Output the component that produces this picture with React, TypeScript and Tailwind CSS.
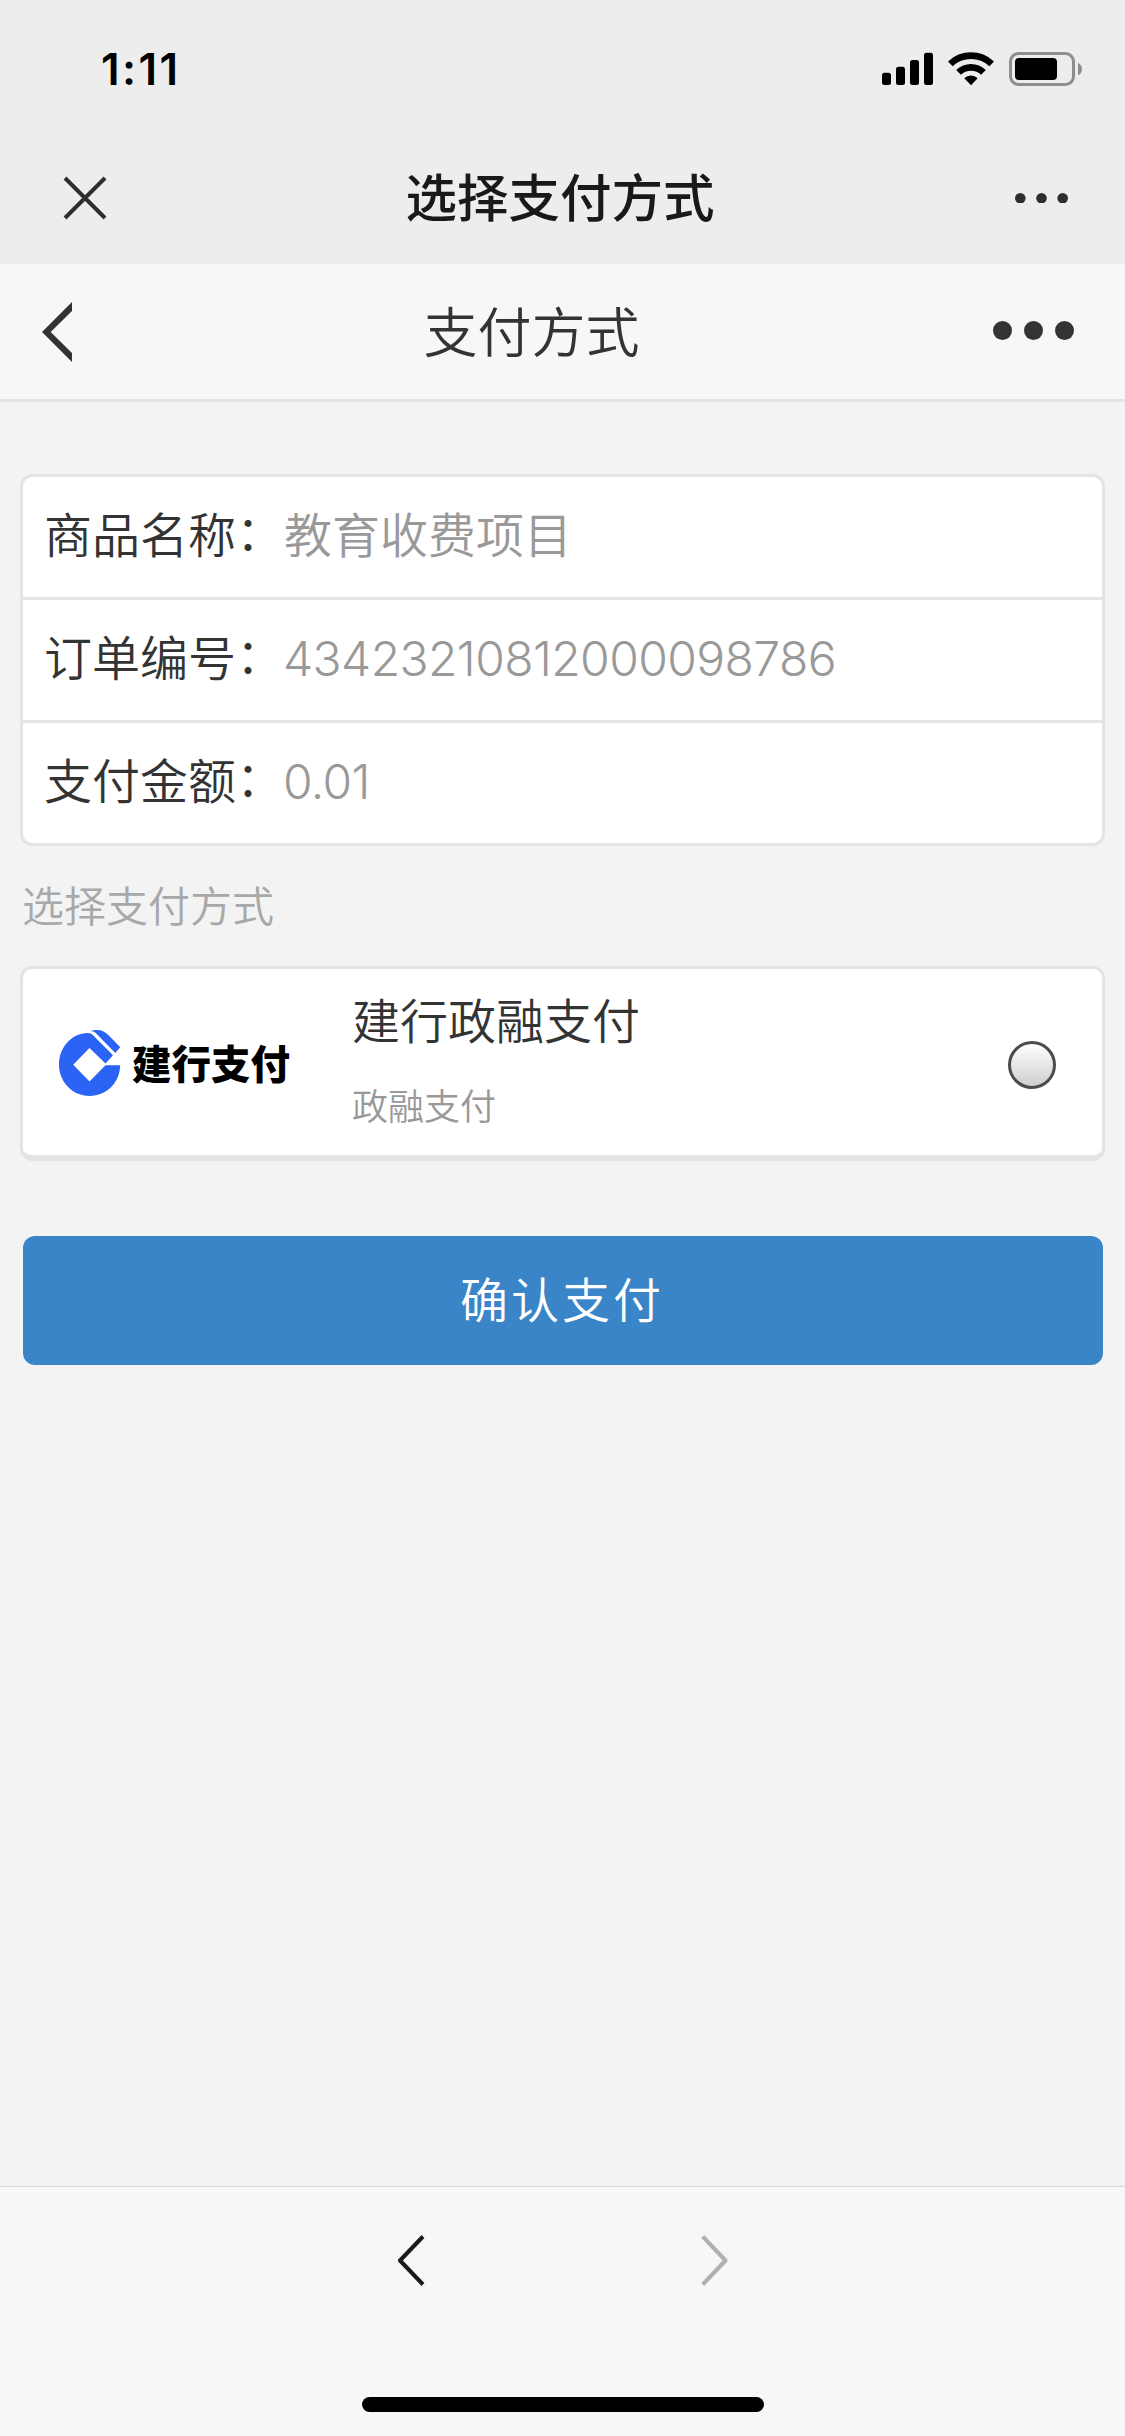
import { useState } from "react";

const ORDER = [
  { label: "商品名称", value: "教育收费项目", numeric: false },
  { label: "订单编号", value: "43423210812000098786", numeric: true },
  { label: "支付金额", value: "0.01", numeric: true },
];

function StatusIcons() {
  return (
    <svg width="200" height="34" viewBox="882 52 200 34">
      <rect x="882" y="72.7" width="9" height="12.3" rx="2.5" />
      <rect x="896" y="66.7" width="9" height="18.3" rx="2.5" />
      <rect x="910" y="60" width="9" height="25" rx="2.5" />
      <rect x="924" y="52.7" width="9" height="32.3" rx="2.5" />
      <path d="M948 61.500a33 33 0 0 1 46 0l-4.600 4.800a26.600 26.600 0 0 0-36.800 0z" />
      <path d="M956.200 70a21 21 0 0 1 29.600 0l-4.700 4.700a14.600 14.600 0 0 0-20.200 0z" />
      <path d="M964.300 78.200a9.600 9.600 0 0 1 13.400 0l-6.700 7z" />
      <rect
        x="1010.5"
        y="53.5"
        width="63"
        height="31"
        rx="8"
        fill="none"
        stroke="#8e8e8e"
        strokeWidth="3"
      />
      <rect x="1015" y="58" width="42" height="22" rx="4" />
      <path d="M1078 63c5.300 2 5.300 10.300 0 12.300z" fill="#8e8e8e" />
    </svg>
  );
}

function Dots({ r, gap, className }: { r: number; gap: number; className?: string }) {
  const w = gap * 2 + r * 2;
  return (
    <svg width={w} height={r * 2} viewBox={`0 0 ${w} ${r * 2}`} className={className}>
      {[0, 1, 2].map((i) => (
        <circle key={i} cx={r + gap * i} cy={r} r={r} />
      ))}
    </svg>
  );
}

function CcbLogo() {
  return (
    <svg width="62" height="66" viewBox="59 90 62 66" fill="#2b64f4" className="mt-[2px] shrink-0">
      <path d="M91.500 93.700L113 115.300L105.500 123.500L89.500 108L73.200 124.700L89.500 141.500L105.500 125.300H120.200C119.800 142.500 107 156 89.500 156C72.500 156 59 142 59 124.500C59 107 72 93.200 87.500 93C89 93 90.300 93.200 91.500 93.700z" />
      <path d="M90.600 91C93 90.200 95 90 97.500 90C101.500 90 105 91.800 107.800 94.500L120.300 107.300L115.300 113L95.500 92.800C94 91.600 92.500 91.100 90.600 91z" />
    </svg>
  );
}

export default function App() {
  const [picked, setPicked] = useState(false);

  return (
    <div className="flex h-[2436px] w-[1125px] flex-col overflow-hidden bg-[#f3f3f3] font-['Noto_Sans_CJK_SC',sans-serif] font-[350] text-[#333]">
      {/* Status bar */}
      <div className="flex h-[132px] items-start justify-between bg-[#ededed] pl-[101px] pr-[43px] pt-[52px] text-black">
        <span className="font-['Inter',sans-serif] text-[44px] font-semibold leading-[34px] tracking-[2.400px]">
          1:11
        </span>
        <StatusIcons />
      </div>

      {/* Browser bar */}
      <div className="grid h-[132px] grid-cols-[1fr_auto_1fr] items-center bg-[#ededed] pl-[63px] pr-[57px]">
        <button aria-label="关闭" className="justify-self-start">
          <svg width="44" height="44" viewBox="0 0 44 44" stroke="#2e2e2e" strokeWidth="4">
            <path d="M2 2L42 42M42 2L2 42" />
          </svg>
        </button>
        <h1 className="mr-[11px] pb-[6px] text-[51.500px] font-medium leading-none text-[#191919]">
          选择支付方式
        </h1>
        <Dots r={5.3} gap={21.2} className="justify-self-end fill-[#2e2e2e]" />
      </div>

      {/* Page header */}
      <header className="flex h-[138px] items-center justify-between border-b-3 border-[#e4e4e4] bg-[#f7f7f7] pl-[42px] pr-[51px]">
        <button aria-label="返回">
          <svg width="30" height="60" viewBox="0 0 30 60" fill="#333">
            <path d="M0 30L30 0V9L8.700 30L30 51V60z" />
          </svg>
        </button>
        <h2 className="mr-[2px] pb-[3px] text-[54px] leading-none">支付方式</h2>
        <Dots r={9.5} gap={31} className="mb-[2px] fill-[#333]" />
      </header>

      <main className="flex-1 px-[20px] pt-[72px]">
        <ul className="divide-y-3 divide-[#e4e4e4] rounded-[12px] border-3 border-[#e4e4e4] bg-white">
          {ORDER.map((row) => (
            <li
              key={row.label}
              className="box-content flex h-[120px] items-center pl-[21px] text-[48px] leading-[72px]"
            >
              <span className="w-[240px] whitespace-nowrap pb-[10px]">
                {row.label}
                {/* half-width punctuation keeps the colon close to the label */}
                <span className="font-['Noto_Sans_CJK_JP',sans-serif] [font-feature-settings:'halt']">
                  ：
                </span>
              </span>
              <span
                className={
                  row.numeric
                    ? "-ml-px pb-[2px] font-['Inter',sans-serif] tracking-[-0.600px] text-[#999]"
                    : "pb-[10px] text-[#999]"
                }
              >
                {row.value}
              </span>
            </li>
          ))}
        </ul>

        <p className="flex h-[120px] items-center pb-[6px] pl-[2px] text-[42px] text-[#a8a8a8]">
          选择支付方式
        </p>

        <label className="flex h-[195px] items-center rounded-[12px] border-3 border-b-6 border-[#e4e4e4] bg-white pl-[36px] pr-[47px]">
          <CcbLogo />
          <span className="ml-[11px] w-[220px] text-[39.500px] font-black leading-none text-black">
            建行支付
          </span>
          <span className="flex flex-1 flex-col">
            <span className="-mt-[9px] text-[48px] leading-[72px]">建行政融支付</span>
            <span className="mt-[20px] text-[36px] leading-[60px] text-[#999]">政融支付</span>
          </span>
          <input
            type="radio"
            checked={picked}
            onChange={() => setPicked(true)}
            className="-mr-px mt-[5px] size-[48px] appearance-none rounded-full border-3 border-[#4c4c4c] bg-linear-to-b from-white to-[#cfcfcf] checked:to-[#3a84c8]"
          />
        </label>

        <button className="mx-[3px] mt-[75px] flex h-[129px] w-[1080px] items-center justify-center rounded-[12px] bg-[#3a84c8] pb-[7px] pr-[2px] text-[48px] tracking-[3px] text-white">
          确认支付
        </button>
      </main>

      {/* Toolbar */}
      <footer className="flex h-[250px] flex-col items-center justify-between border-t border-[#dadada] bg-[#f7f7f7] pb-[24px] pt-[48px]">
        <div className="flex w-[330px] justify-between">
          <svg width="27" height="51" viewBox="0 0 27 51" fill="none" stroke="#1a1a1a" strokeWidth="4">
            <path d="M25 1.500L2 25.500L25 49.500" strokeLinejoin="round" />
          </svg>
          <svg width="27" height="51" viewBox="0 0 27 51" fill="none" stroke="#b0b0b0" strokeWidth="4">
            <path d="M1.700 1.500L24.500 25.500L1.700 49.500" strokeLinejoin="round" />
          </svg>
        </div>
        <div className="h-[15px] w-[402px] rounded-full bg-black" />
      </footer>
    </div>
  );
}
